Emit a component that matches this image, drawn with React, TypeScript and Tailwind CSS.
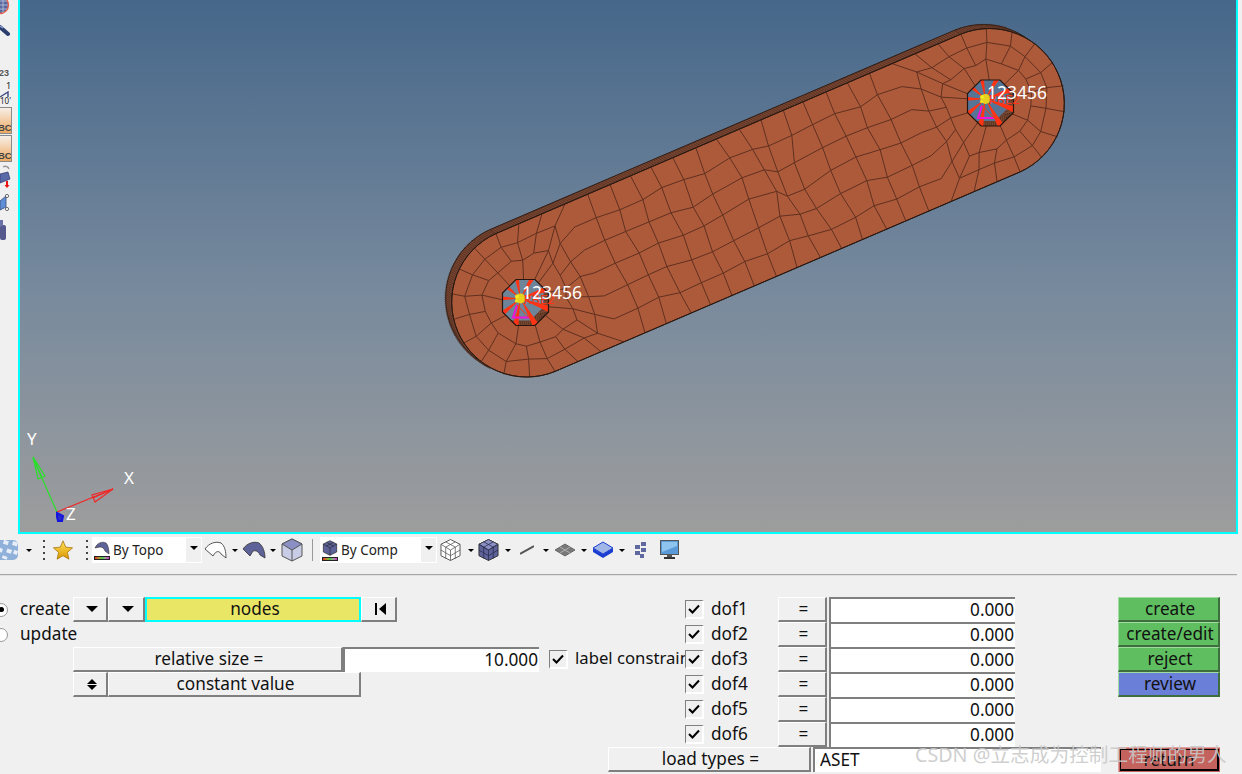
import React from "react";

type P = [number, number];
const R = 75;
const A: P = [525.5, 302.5];
const B: P = [990.5, 103];
const dx = B[0] - A[0];
const dy = B[1] - A[1];
const LEN = Math.hypot(dx, dy);
const U: P = [dx / LEN, dy / LEN];
const N: P = [-U[1], U[0]];
const world = (c: P, s: number, t: number, sg: number): P => [
  c[0] + sg * s * U[0] + t * N[0],
  c[1] + sg * s * U[1] + t * N[1],
];
const noise = (i: number, j: number, k: number) => {
  const v = Math.sin(i * 12.9898 + j * 78.233 + k * 37.719) * 43758.5453;
  return (v - Math.floor(v)) * 2 - 1;
};
const fmt = (p: P) => `${p[0].toFixed(1)} ${p[1].toFixed(1)}`;

function octR(theta: number, ap: number) {
  const q = Math.PI / 4;
  let m = (theta + q / 2) % q;
  if (m < 0) m += q;
  return ap / Math.cos(m - q / 2);
}

const ROWS = 6;

function capMesh(c: P, sg: number, id: number): string {
  const bd: [number, number][] = [];
  for (let i = 0; i < 3; i++) bd.push([-R + (i * R) / 3, -R]);
  for (let i = 0; i < 9; i++) {
    const a = -Math.PI / 2 + (i * Math.PI) / 9;
    bd.push([R * Math.cos(a), R * Math.sin(a)]);
  }
  for (let i = 0; i < 3; i++) bd.push([(-i * R) / 3, R]);
  for (let i = 0; i < ROWS; i++) bd.push([-R, R - (i * 2 * R) / ROWS]);
  const M = bd.length;
  const fr = [0, 0.36, 0.68, 1];
  const grid: P[][] = bd.map(([s, t], i) => {
    const w = world(c, s, t, sg);
    const th = Math.atan2(w[1] - c[1], w[0] - c[0]);
    const ir = octR(th, 23);
    const inner: P = [c[0] + ir * Math.cos(th), c[1] + ir * Math.sin(th)];
    return fr.map((f, k) => {
      const x = inner[0] + (w[0] - inner[0]) * f;
      const y = inner[1] + (w[1] - inner[1]) * f;
      if (k === 0 || k === 3) return [x, y] as P;
      return [x + noise(i, k, id) * 3, y + noise(i, k, id + 5) * 3] as P;
    });
  });
  let d = "";
  for (let i = 0; i < M; i++) {
    if (i % 2 === 0) d += `M${fmt(grid[i][0])}L${fmt(grid[i][1])}`;
    d += `M${fmt(grid[i][1])}L${fmt(grid[i][2])}L${fmt(grid[i][3])}`;
    const nx = grid[(i + 1) % M];
    for (let k = 1; k < 3; k++) d += `M${fmt(grid[i][k])}L${fmt(nx[k])}`;
  }
  return d;
}

function midMesh(): string {
  const cols = 15;
  const rows = ROWS;
  const span = LEN - 2 * R;
  const nodes: P[][] = [];
  for (let i = 0; i <= cols; i++) {
    const line: P[] = [];
    for (let j = 0; j <= rows; j++) {
      const fc = i / cols;
      const fr = j / rows;
      let s = R + span * fc;
      let t = -R + 2 * R * fr;
      if (i > 0 && i < cols && j > 0 && j < rows) {
        const bump = Math.exp(-(((fc - 0.58) / 0.18) ** 2)) * Math.exp(-(((fr - 0.45) / 0.3) ** 2));
        s += noise(i, j, 1) * 2.5 - bump * 12 * Math.sin((fc - 0.58) * 18);
        t += noise(i, j, 2) * 2.5 + bump * 9 * Math.cos(fc * 20);
      } else if (i > 0 && i < cols) {
        s += noise(i, j, 3) * 2;
      }
      line.push(world(A, s, t, 1));
    }
    nodes.push(line);
  }
  let d = "";
  for (let i = 0; i <= cols; i++) {
    for (let j = 0; j <= rows; j++) {
      if (j < rows && i > 0 && i < cols) d += `M${fmt(nodes[i][j])}L${fmt(nodes[i][j + 1])}`;
      if (i < cols && j > 0 && j < rows) d += `M${fmt(nodes[i][j])}L${fmt(nodes[i + 1][j])}`;
    }
  }
  return d;
}

const OFF: P = [-6, -4];
function stadium(o: P = [0, 0]) {
  const a = [A[0] + o[0], A[1] + o[1]] as P;
  const b = [B[0] + o[0], B[1] + o[1]] as P;
  const p1 = world(a, 0, -R, 1);
  const p2 = world(b, 0, -R, 1);
  const p3 = world(b, 0, R, 1);
  const p4 = world(a, 0, R, 1);
  return `M${fmt(p1)}L${fmt(p2)}A${R} ${R} 0 0 1 ${fmt(p3)}L${fmt(p4)}A${R} ${R} 0 0 1 ${fmt(p1)}Z`;
}

function hatch(): string {
  let d = "";
  const add = (f: P) => {
    d += `M${fmt(f)}L${fmt([f[0] + OFF[0], f[1] + OFF[1]])}`;
  };
  for (let s = 0; s <= LEN; s += 2.5) add(world(A, s, -R, 1));
  for (let a = 0; a < 130; a += 1.5) {
    const r = ((a + 90) * Math.PI) / 180;
    add(world(A, R * Math.cos(r), -R * Math.sin(r), 1));
  }
  for (let a = 0; a < 40; a += 1.5) {
    const r = (a * Math.PI) / 180;
    add(world(B, R * Math.sin(r), -R * Math.cos(r), 1));
  }
  return d;
}

function octagon(c: P, ap: number) {
  const out: string[] = [];
  const r = ap / Math.cos(Math.PI / 8);
  for (let i = 0; i < 8; i++) {
    const a = Math.PI / 8 + (i * Math.PI) / 4;
    out.push(`${(c[0] + r * Math.cos(a)).toFixed(1)},${(c[1] + r * Math.sin(a)).toFixed(1)}`);
  }
  return out.join(" ");
}

function Hole({ c, id, fill }: { c: P; id: string; fill: string }) {
  const o: P = [c[0] - 5, c[1] - 4];
  const rays: string[] = [];
  for (let i = 0; i < 9; i++) {
    const a = -1.75 + i * 0.7;
    const l = 42;
    const w = 0.1;
    rays.push(
      `${o[0]},${o[1]} ${(o[0] + l * Math.cos(a - w)).toFixed(1)},${(o[1] + l * Math.sin(a - w)).toFixed(1)} ${(o[0] + l * Math.cos(a + w)).toFixed(1)},${(o[1] + l * Math.sin(a + w)).toFixed(1)}`
    );
  }
  return (
    <g>
      <clipPath id={id}>
        <polygon points={octagon(c, 23)} />
      </clipPath>
      <polygon points={octagon(c, 23)} fill="#7c4a33" />
      <g clipPath={`url(#${id})`}>
        <path
          d={Array.from({ length: 30 }, (_, i) => `M${c[0] - 25 + i * 2} ${c[1] + 10}L${c[0] - 25 + i * 2 + 3} ${c[1] + 26}`).join("")}
          stroke="#4a2a1c"
          strokeWidth={0.6}
        />
        <path
          d={Array.from({ length: 12 }, (_, i) => `M${c[0] + 14} ${c[1] - 6 + i * 3}L${c[0] + 26} ${c[1] - 10 + i * 3}`).join("")}
          stroke="#4a2a1c"
          strokeWidth={0.6}
        />
        <polygon points={octagon([c[0] - 5, c[1] - 5], 23)} fill={fill} />
        <g clipPath={`url(#${id})`}>
          {rays.map((r, i) => (
            <polygon key={i} points={r} fill="#ff3414" />
          ))}
        </g>
      </g>
      <polygon points={octagon(c, 23)} fill="none" stroke="#26160f" strokeWidth={1.2} />
      <path
        d={`M${c[0] - 8.5} ${c[1] + 2.5}L${c[0] - 12.5} ${c[1] + 15}L${c[0] + 3.5} ${c[1] + 15}`}
        fill="none"
        stroke="#f012d8"
        strokeWidth={2}
      />
      <path d={`M${c[0] - 8.5} ${c[1] + 2.5}L${c[0] + 3.5} ${c[1] + 15}`} stroke="#ff3414" strokeWidth={1} />
      <circle cx={o[0]} cy={o[1]} r={5} fill="#e6d21e" />
      <circle cx={o[0] - 3.5} cy={o[1] - 2} r={2} fill="#f4e81e" />
      <circle cx={o[0] - 4} cy={o[1] + 2.5} r={1.6} fill="#f4e81e" />
      <text x={c[0] - 2} y={c[1] + 1} fontSize={13} fill="#ff3414" fontFamily="'Noto Sans',sans-serif">
        RBE2
      </text>
      <text x={c[0] - 3.5} y={c[1] - 4} fontSize={17.5} fill="#ffffff" fontFamily="'Noto Sans',sans-serif">
        123456
      </text>
    </g>
  );
}

function Triad() {
  return (
    <g fill="none">
      <path d="M57 512L33 458" stroke="#28e028" strokeWidth={1.2} />
      <path d="M33 457L38 479L45 476Z M33 457L42 477.5" stroke="#28e028" strokeWidth={1.2} />
      <path d="M57 512L113 489" stroke="#f02828" strokeWidth={1.2} />
      <path d="M113 489L92 495L95 502Z M113 489L93 498" stroke="#f02828" strokeWidth={1.2} />
      <path d="M57 513L63 516L62 521L58 521L57 517Z" stroke="#1414e0" strokeWidth={2} fill="#2a2ac8" />
      <g fill="#ffffff" fontSize={17} fontFamily="'Noto Sans',sans-serif">
        <text x={27} y={445}>Y</text>
        <text x={124} y={484}>X</text>
        <text x={66} y={520}>Z</text>
      </g>
    </g>
  );
}

function Viewport() {
  return (
    <div className="w-[1220px] h-[534px] shrink-0 border-2 border-t-0 border-[#00ffff] bg-gradient-to-b from-[#46678a] via-[#788a9d] via-55% to-[#9d9d9d] overflow-hidden">
      <svg width={1216} height={532} viewBox="20 0 1216 532" className="block">
        <path d={stadium(OFF)} fill="#7a4632" stroke="#2a1a12" strokeWidth={1} />
        <path d={hatch()} stroke="#4b2a1c" strokeWidth={0.7} fill="none" />
        <path d={stadium()} fill="#ad5a3b" stroke="#2b1a12" strokeWidth={1} />
        <path d={capMesh(A, -1, 1)} stroke="#60301f" strokeWidth={1} fill="none" />
        <path d={capMesh(B, 1, 2)} stroke="#60301f" strokeWidth={1} fill="none" />
        <path d={midMesh()} stroke="#60301f" strokeWidth={1} fill="none" />
        <path d={stadium()} fill="none" stroke="#2b1a12" strokeWidth={1} />
        <Hole c={A} id="hA" fill="#6d8499" />
        <Hole c={B} id="hB" fill="#567596" />
        <Triad />
      </svg>
    </div>
  );
}

function LeftRail() {
  return (
    <div className="w-[18px] h-[534px] shrink-0 overflow-hidden flex flex-col text-[#555]">
      <svg width={18} height={18} viewBox="0 0 18 18" className="block shrink-0">
        <circle cx={0} cy={5} r={8.5} fill="#5a6aa0" stroke="#e8604c" strokeWidth={1.4} />
        <path d="M0 1H7M0 5H8M0 9H7M3 0V13" stroke="#c8d0e8" strokeWidth={0.7} />
      </svg>
      <svg width={18} height={16} viewBox="0 0 18 16" className="block shrink-0 mt-[7px]">
        <path d="M0 2L8 9" stroke="#2c3e6e" strokeWidth={4} strokeLinecap="round" />
        <path d="M0 1L3 3" stroke="#90a8d8" strokeWidth={1.4} />
      </svg>
      <div className="mt-[27px] h-[10px] w-[18px] text-[9px] leading-[10px] font-bold font-['Liberation_Sans',sans-serif] -ml-[1px]">23</div>
      <svg width={18} height={26} viewBox="0 0 18 26" className="block shrink-0 mt-[2px]">
        <text x={6} y={9} fontSize={9} fill="#222" fontFamily="'Noto Sans',sans-serif">1</text>
        <path d="M0 17L8 12V17" stroke="#3c4a80" strokeWidth={1.4} fill="none" />
        <text x={0} y={24} fontSize={8} fill="#222" fontFamily="'Noto Sans',sans-serif">10'</text>
      </svg>
      <BcBox />
      <BcBox />
      <svg width={18} height={24} viewBox="0 0 18 24" className="block shrink-0 mt-[3px]">
        <path d="M0 9L8 7L10 14L0 18Z" fill="#5a6aa8" stroke="#2a3468" strokeWidth={0.7} />
        <path d="M3 2A4 4 0 0 1 9 4" stroke="#999" strokeWidth={1.4} fill="none" />
        <path d="M7 16V21" stroke="#ee1111" strokeWidth={2} />
        <path d="M4.5 20H9.5L7 23Z" fill="#ee1111" />
      </svg>
      <svg width={18} height={20} viewBox="0 0 18 20" className="block shrink-0 mt-[4px]">
        <path d="M0 8L6 3V14L0 17Z" fill="#5f8ed8" stroke="#3a4a78" strokeWidth={0.8} />
        <circle cx={7} cy={3} r={1.6} fill="#fff" stroke="#333" strokeWidth={0.7} />
        <circle cx={7} cy={16} r={1.6} fill="#fff" stroke="#333" strokeWidth={0.7} />
      </svg>
      <svg width={18} height={24} viewBox="0 0 18 24" className="block shrink-0 mt-[6px]">
        <rect x={0} y={6} width={6} height={15} rx={2} fill="#54588c" />
        <rect x={0} y={1} width={3} height={6} fill="#6a70a8" />
      </svg>
    </div>
  );
}

function BcBox() {
  return (
    <div className="w-[12px] h-[27px] shrink-0 border border-l-0 border-[#8a8a8a] bg-gradient-to-b from-[#f6efe6] to-[#eda85e] flex items-end overflow-hidden mt-[1px]">
      <span className="text-[9.5px] leading-[10px] font-bold font-['Liberation_Sans',sans-serif] text-[#444] -ml-[2px]">BC</span>
    </div>
  );
}

function Caret({ ml }: { ml: string }) {
  return <div className={`${ml} -mr-px w-0 h-0 shrink-0 border-x-[3px] border-x-transparent border-t-[3px] border-t-black`} />;
}

function Dots({ ml }: { ml: string }) {
  return (
    <div className={`${ml} w-[2px] h-[22px] shrink-0 flex flex-col justify-between py-[1px]`}>
      <i className="block w-[2px] h-[2px] bg-[#444]" />
      <i className="block w-[2px] h-[2px] bg-[#444]" />
      <i className="block w-[2px] h-[2px] bg-[#444]" />
      <i className="block w-[2px] h-[2px] bg-[#444]" />
    </div>
  );
}

function Combo({ ml, w, label, icon }: { ml: string; w: string; label: string; icon: React.ReactNode }) {
  return (
    <div className={`${ml} ${w} h-[26px] shrink-0 bg-white flex items-center pl-[1px] pr-[1px]`}>
      <div className="w-[17px] h-[26px] shrink-0 flex flex-col items-center justify-center">
        {icon}
        <div className="w-[16px] h-[4px] mt-[1px] bg-gradient-to-r from-[#e02020] via-[#20d040] to-[#d020d0] border border-[#222]" />
      </div>
      <span className="ml-[3px] flex-1 text-[13.5px] text-[#222] font-['Noto_Sans',sans-serif] whitespace-nowrap">{label}</span>
      <div className="w-[15px] h-[24px] shrink-0 bg-[#f0f0f0] flex items-start justify-center pt-[8px]">
        <div className="w-0 h-0 border-x-[4px] border-x-transparent border-t-[4px] border-t-black" />
      </div>
    </div>
  );
}

const BLUE = "#5d6298";

function Toolbar() {
  return (
    <div className="h-[32px] w-full flex items-center shrink-0">
      <svg width={18} height={22} viewBox="0 0 18 22" className="shrink-0">
        <rect x={-4} y={1} width={22} height={20} rx={5} fill="#8fb0d8" />
        <g fill="#e8eef8" transform="rotate(20 9 11)">
          <rect x={1} y={3} width={5} height={4} />
          <rect x={10} y={1} width={5} height={4} />
          <rect x={-2} y={12} width={5} height={4} />
          <rect x={7} y={10} width={5} height={4} />
          <rect x={14} y={9} width={4} height={4} />
          <rect x={5} y={18} width={5} height={3} />
        </g>
      </svg>
      <Caret ml="ml-[8px]" />
      <Dots ml="ml-[12px]" />
      <svg width={20} height={20} viewBox="0 0 24 24" className="ml-[8px] shrink-0">
        <defs>
          <linearGradient id="st" x1="0" y1="0" x2="0" y2="1">
            <stop offset="0" stopColor="#ffe25a" />
            <stop offset="1" stopColor="#dc9600" />
          </linearGradient>
        </defs>
        <path d="M12 1L15.3 8.6L23.5 9.4L17.3 14.9L19.1 23L12 18.8L4.9 23L6.7 14.9L0.5 9.4L8.7 8.6Z" fill="url(#st)" stroke="#a87a14" strokeWidth={1} />
      </svg>
      <Dots ml="ml-[13px]" />
      <Combo
        ml="ml-[4px]"
        w="w-[110px]"
        label="By Topo"
        icon={
          <svg width={16} height={14} viewBox="0 0 16 14">
            <path d="M1 7C3 2 8 0 12 2C14 4 15 8 15 13L11 10C10 7 8 6 6 6Z" fill={BLUE} stroke="#333" strokeWidth={0.6} />
          </svg>
        }
      />
      <svg width={24} height={20} viewBox="0 0 24 20" className="ml-[2px] shrink-0">
        <path d="M1 9C5 3 12 1 17 3C21 6 22 12 22 18L17 14C16 11 12 10 9 16Z" fill="#fff" stroke="#555" strokeWidth={1} />
      </svg>
      <Caret ml="ml-[4px]" />
      <svg width={24} height={20} viewBox="0 0 24 20" className="ml-[5px] shrink-0">
        <path d="M1 9C5 3 12 1 17 3C21 6 23 12 23 18L18 15C17 12 14 10 11 11L8 16Z" fill={BLUE} stroke="#333" strokeWidth={0.8} />
      </svg>
      <Caret ml="ml-[4px]" />
      <svg width={22} height={24} viewBox="0 0 22 24" className="ml-[6px] shrink-0">
        <path d="M11 1L21 6V18L11 23L1 18V6Z" fill="#c8cce4" stroke="#555" strokeWidth={1} />
        <path d="M11 1L21 6L11 12L1 6Z" fill="#8a90c4" stroke="#555" strokeWidth={1} />
        <path d="M11 12V23" stroke="#555" strokeWidth={1} />
      </svg>
      <div className="ml-[9px] w-px h-[22px] bg-[#999] shrink-0" />
      <Combo
        ml="ml-[7px]"
        w="w-[117px]"
        label="By Comp"
        icon={
          <svg width={16} height={16} viewBox="0 0 22 24">
            <path d="M11 1L21 6V18L11 23L1 18V6Z" fill={BLUE} stroke="#222" strokeWidth={1} />
            <path d="M1 6L11 12L21 6M11 12V23M6 3.5L16 9M16 3.5L6 9" stroke="#222" strokeWidth={0.9} fill="none" />
          </svg>
        }
      />
      <svg width={21} height={24} viewBox="0 0 22 24" className="ml-[3px] shrink-0">
        <path d="M11 1L21 6V18L11 23L1 18V6Z" fill="#fff" stroke="#555" strokeWidth={1} />
        <path d="M1 6L11 12L21 6M11 12V23M6 3.5L16 9M16 3.5L6 9M1 12L11 18L21 12M6 9V21M16 9V21" stroke="#555" strokeWidth={0.8} fill="none" />
      </svg>
      <Caret ml="ml-[7px]" />
      <svg width={21} height={24} viewBox="0 0 22 24" className="ml-[5px] shrink-0">
        <path d="M11 1L21 6V18L11 23L1 18V6Z" fill={BLUE} stroke="#333" strokeWidth={1} />
        <path d="M1 6L11 1L21 6L11 12Z" fill="#8a90c4" stroke="#333" strokeWidth={0.8} />
        <path d="M1 6L11 12L21 6M11 12V23M6 3.5L16 9M16 3.5L6 9M1 12L11 18L21 12M6 9V21M16 9V21" stroke="#2a2c50" strokeWidth={0.8} fill="none" />
      </svg>
      <Caret ml="ml-[6px]" />
      <svg width={14} height={10} viewBox="0 0 14 10" className="ml-[10px] shrink-0">
        <path d="M0 9L14 1" stroke="#555" strokeWidth={2} />
      </svg>
      <Caret ml="ml-[9px]" />
      <svg width={22} height={14} viewBox="0 0 22 14" className="ml-[6px] shrink-0">
        <path d="M11 1L21 7L11 13L1 7Z" fill="#7a7a7a" stroke="#555" strokeWidth={0.8} />
        <path d="M6 4L16 10M16 4L6 10" stroke="#bbb" strokeWidth={0.8} />
      </svg>
      <Caret ml="ml-[5px]" />
      <svg width={22} height={18} viewBox="0 0 22 18" className="ml-[6px] shrink-0">
        <path d="M1 7V11L11 17L21 11V7L11 13Z" fill="#1c3ed0" />
        <path d="M11 1L21 7L11 13L1 7Z" fill="#9fb6e6" stroke="#1c3ed0" strokeWidth={1} />
      </svg>
      <Caret ml="ml-[5px]" />
      <svg width={13} height={18} viewBox="0 0 13 18" className="ml-[10px] shrink-0" fill="#6068a0">
        <rect x={7} y={1} width={5} height={4} />
        <rect x={1} y={4} width={5} height={4} />
        <rect x={7} y={7} width={5} height={4} />
        <rect x={1} y={10} width={5} height={4} />
        <rect x={6} y={13} width={4} height={4} />
      </svg>
      <svg width={19} height={20} viewBox="0 0 19 20" className="ml-[13px] shrink-0">
        <rect x={0.5} y={0.5} width={18} height={14} fill="#5a9ad8" stroke="#555" />
        <path d="M2 2H17V6L2 12Z" fill="#8ec4ee" />
        <rect x={7} y={15} width={5} height={2} fill="#555" />
        <rect x={4} y={17} width={11} height={2} fill="#333" />
      </svg>
    </div>
  );
}

const RAISED = "border-t border-l border-t-white border-l-white border-b-2 border-r-2 border-b-[#7f7f7f] border-r-[#7f7f7f]";

function Btn({ w, children, ml }: { w: string; children?: React.ReactNode; ml?: string }) {
  return (
    <div className={`${w} ${ml ?? ""} h-[25px] shrink-0 bg-[#f0f0f0] ${RAISED} flex items-center justify-center whitespace-nowrap pl-[3px]`}>
      {children}
    </div>
  );
}

function Input({ w, value, ml }: { w: string; value: string; ml?: string }) {
  return (
    <div className={`${w} ${ml ?? ""} h-[25px] shrink-0 bg-white border-t-2 border-l-2 border-t-[#7f7f7f] border-l-[#7f7f7f] flex items-center justify-end pr-px pb-[2px] overflow-hidden`}>
      {value}
    </div>
  );
}

function Check({ ml }: { ml: string }) {
  return (
    <div className={`${ml} relative z-10 w-[19px] h-[19px] shrink-0 bg-[#f0f0f0] border-t border-l border-[#7f7f7f] border-r-2 border-b-2 border-r-white border-b-white flex items-center justify-center`}>
      <svg width={12} height={10} viewBox="0 0 12 10">
        <path d="M1 5L4.5 8.5L11 1.5" fill="none" stroke="#000" strokeWidth={2} />
      </svg>
    </div>
  );
}

function Radio({ on }: { on?: boolean }) {
  return (
    <div className="-ml-[6px] w-[14px] h-[14px] shrink-0 rounded-full bg-white border border-[#999] flex items-center justify-center">
      {on && <div className="w-[5px] h-[5px] rounded-full bg-black" />}
    </div>
  );
}

function Tri() {
  return <div className="w-0 h-0 border-x-[6px] border-x-transparent border-t-[6px] border-t-black" />;
}

function Row({ children }: { children: React.ReactNode }) {
  return <div className="h-[25px] flex items-center">{children}</div>;
}

function ActionBtn({ bg, children }: { bg: string; children: React.ReactNode }) {
  return (
    <div className={`${bg} w-[102px] h-[25px] pl-[3px] border-t border-l border-t-[#a0dca0] border-l-[#a0dca0] border-b-2 border-r-2 border-b-[#3e6e3e] border-r-[#3e6e3e] flex items-center justify-center whitespace-nowrap`}>
      {children}
    </div>
  );
}

function Panel() {
  return (
    <div className="pt-[21px] text-[17.2px] leading-none text-[#111] font-['Noto_Sans',sans-serif]">
      <div className="flex">
        <div className="w-[683px] shrink-0">
          <Row>
            <Radio on />
            <span className="ml-[12px] w-[53px] -mt-[2px]">create</span>
            <Btn w="w-[35px]"><Tri /></Btn>
            <Btn w="w-[37px]"><Tri /></Btn>
            <div className="w-[216px] h-[25px] shrink-0 bg-[#e8e664] border-2 border-[#00ffff] flex items-center justify-center pl-[4px] pb-px">nodes</div>
            <Btn w="w-[36px]">
              <div className="flex items-center">
                <div className="w-[2px] h-[12px] bg-black" />
                <div className="ml-[2px] w-0 h-0 border-y-[6px] border-y-transparent border-r-[7px] border-r-black" />
              </div>
            </Btn>
          </Row>
          <Row>
            <Radio />
            <span className="ml-[12px] -mt-[2px]">update</span>
          </Row>
          <Row>
            <Btn w="w-[270px]" ml="ml-[73px]">relative size =</Btn>
            <Input w="w-[196px]" value="10.000" />
            <Check ml="ml-[10px]" />
            <span className="ml-[7px] -mt-[2px] whitespace-nowrap text-[16.7px]">label constraints</span>
          </Row>
          <Row>
            <Btn w="w-[35px]" ml="ml-[73px]">
              <div className="flex flex-col items-center gap-[1px]">
                <div className="w-0 h-0 border-x-[5px] border-x-transparent border-b-[5px] border-b-black" />
                <div className="w-0 h-0 border-x-[5px] border-x-transparent border-t-[5px] border-t-black" />
              </div>
            </Btn>
            <Btn w="w-[253px]">constant value</Btn>
          </Row>
        </div>
        <div className="w-[435px] shrink-0">
          {["dof1", "dof2", "dof3", "dof4", "dof5", "dof6"].map((d) => (
            <Row key={d}>
              <Check ml="ml-[2px]" />
              <span className="ml-[7px] w-[67px] -mt-[2px]">{d}</span>
              <Btn w="w-[49px]">=</Btn>
              <Input w="w-[186px]" ml="ml-[2px]" value="0.000" />
            </Row>
          ))}
        </div>
        <div className="w-[102px] shrink-0">
          <ActionBtn bg="bg-[#5fbf60]">create</ActionBtn>
          <ActionBtn bg="bg-[#5fbf60]">create/edit</ActionBtn>
          <ActionBtn bg="bg-[#5fbf60]">reject</ActionBtn>
          <ActionBtn bg="bg-[#6a7fd8]">review</ActionBtn>
        </div>
      </div>
      <div className="flex items-center ml-[608px] h-[25px]">
        <Btn w="w-[203px]">load types =</Btn>
        <div className="ml-[2px] w-[288px] h-[25px] shrink-0 bg-white border-t-2 border-l-2 border-t-[#7f7f7f] border-l-[#7f7f7f] flex items-center pl-[5px] pb-[2px]">ASET</div>
        <div className="ml-[17px] w-[102px] h-[25px] shrink-0 bg-[#c4625e] border-t border-l border-t-[#e0a0a0] border-l-[#e0a0a0] p-px">
          <div className="w-full h-full border border-b-2 border-r-2 border-black flex items-center justify-center">return</div>
        </div>
      </div>
    </div>
  );
}

export default function App() {
  return (
    <div className="relative w-[1242px] h-[774px] overflow-hidden bg-[#f0f0f0] font-['Noto_Sans',sans-serif]">
      <div className="flex">
        <LeftRail />
        <Viewport />
      </div>
      <Toolbar />
      <div className="mt-[8px] w-[1237px] h-[2px] bg-gradient-to-b from-[#8a8a8a] to-[#ffffff]" />
      <Panel />
      <div className="absolute left-[915px] top-[742px] text-[19.7px] leading-[26px] whitespace-nowrap text-[#c9c9c9]/90 font-['Noto_Sans','Noto_Sans_CJK_SC',sans-serif]">
        CSDN @立志成为控制工程师的男人
      </div>
    </div>
  );
}
